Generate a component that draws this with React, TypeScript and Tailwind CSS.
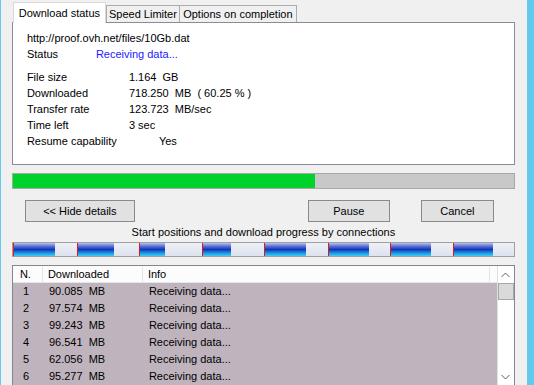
const segments = [
  { w: 64, done: 42 },
  { w: 62, done: 37 },
  { w: 63, done: 26 },
  { w: 62, done: 29 },
  { w: 64, done: 42 },
  { w: 62, done: 41 },
  { w: 63, done: 41 },
  { w: 61, done: 40 },
];

const connections = [
  { n: 1, size: "90.085" },
  { n: 2, size: "97.574" },
  { n: 3, size: "99.243" },
  { n: 4, size: "96.541" },
  { n: 5, size: "62.056" },
  { n: 6, size: "95.277" },
];

const details = [
  { label: "File size", value: "1.164  GB" },
  { label: "Downloaded", value: "718.250  MB  ( 60.25 % )" },
  { label: "Transfer rate", value: "123.723  MB/sec" },
  { label: "Time left", value: "3 sec" },
];

function Button({ children, className }: { children: React.ReactNode; className: string }) {
  return (
    <div
      className={`h-[22px] flex items-center justify-center bg-[#e1e1e1] border border-[#8a8a8a] ${className}`}
    >
      {children}
    </div>
  );
}

export default function App() {
  return (
    <div
      className="w-[534px] h-[385px] overflow-hidden flex bg-[#f0f0f0] text-[11px] text-black whitespace-pre"
      style={{ fontFamily: '"Liberation Sans", Arial, sans-serif' }}
    >
      <div className="w-px bg-[#62caeb]" />

      <div className="flex-1 flex flex-col pl-[11px] pr-[12px] pt-[2px]">
        {/* tabs */}
        <div className="flex items-start pl-px h-[21px] relative z-10">
          <div className="w-[93px] h-[21px] flex items-center justify-center bg-white border border-b-0 border-[#d9d9d9]">
            Download status
          </div>
          <div className="mt-[3px] w-[74px] h-[17px] flex items-center justify-center bg-[#f0f0f0] border border-b-0 border-[#acacac]">
            Speed Limiter
          </div>
          <div className="mt-[3px] w-[117px] h-[17px] flex items-center justify-center bg-[#f0f0f0] border border-b-0 border-l-0 border-[#acacac]">
            Options on completion
          </div>
        </div>

        {/* panel */}
        <div className="-mt-px h-[144px] bg-white border border-[#898c95] pl-[14px] pt-[7px]">
          <div className="h-[16px] leading-[16px]">http://proof.ovh.net/files/10Gb.dat</div>
          <div className="h-[16px] leading-[16px] flex">
            <span className="w-[69px]">Status</span>
            <span className="text-[#1a1aff]">Receiving data...</span>
          </div>
          <div className="mt-[7px]">
            {details.map((d) => (
              <div key={d.label} className="h-[16px] leading-[16px] flex">
                <span className="w-[102px]">{d.label}</span>
                <span>{d.value}</span>
              </div>
            ))}
            <div className="h-[17px] leading-[17px] flex">
              <span className="w-[132px]">Resume capability</span>
              <span>Yes</span>
            </div>
          </div>
        </div>

        {/* progress */}
        <div className="mt-[8px] h-[16px] flex border border-[#a8a8a8] bg-[#c8c8c8]">
          <div className="w-[302px] bg-[#00d22b]" />
        </div>

        {/* buttons */}
        <div className="mt-[11px] flex">
          <Button className="ml-[13px] w-[110px]">{"<< Hide details"}</Button>
          <Button className="ml-[173px] w-[82px]">Pause</Button>
          <Button className="ml-[31px] w-[73px]">Cancel</Button>
        </div>

        <div className="mt-[3px] h-[15px] leading-[15px] text-center">
          Start positions and download progress by connections
        </div>

        {/* connections bar */}
        <div className="mt-[2px] h-[15px] flex border border-[#a0a0a0]">
          {segments.map((s, i) => (
            <div key={i} className="flex shrink-0 h-full" style={{ width: s.w }}>
              <div className="w-px shrink-0 h-full bg-[#e01818]" />
              <div
                className="shrink-0 h-full bg-[linear-gradient(to_bottom,#b8c2ee_0%,#5a72d8_25%,#1434b4_50%,#1c8ee0_75%,#3cd0f4_100%)]"
                style={{ width: s.done - 1 }}
              />
              <div className="flex-1 h-full bg-[linear-gradient(to_bottom,#eef0f7,#dde2ee)]" />
            </div>
          ))}
        </div>

        {/* list */}
        <div className="mt-[8px] flex-1 flex border border-[#828790] border-b-0 bg-[#bfb4bd]">
          <div className="flex-1 flex flex-col">
            <div className="h-[17px] flex bg-[#fcfcfc] border-b border-[#e5e5e5]">
              <div className="w-[30px] pl-[7px] leading-[16px] border-r border-[#e5e5e5]">N.</div>
              <div className="w-[100px] pl-[5px] leading-[16px] border-r border-[#e5e5e5]">Downloaded</div>
              <div className="w-[347px] pl-[5px] leading-[16px] border-r border-[#e5e5e5]">Info</div>
            </div>
            {connections.map((c) => (
              <div key={c.n} className="h-[17px] leading-[17px] flex">
                <div className="w-[30px] pl-[10px]">{c.n}</div>
                <div className="w-[100px] pl-[6px]">{c.size}  MB</div>
                <div className="pl-[6px]">Receiving data...</div>
              </div>
            ))}
          </div>

          {/* scrollbar */}
          <div className="w-[17px] flex flex-col bg-white border-l border-[#e0e0e0]">
            <div className="h-[17px] flex items-center justify-center">
              <svg width="9" height="6" viewBox="0 0 9 6">
                <path d="M0.5 5 L4.5 1 L8.5 5" fill="none" stroke="#606060" strokeWidth="1" />
              </svg>
            </div>
            <div className="h-[17px] bg-[#dadada] border border-[#a8a8a8]" />
            <div className="flex-1" />
            <div className="h-[17px] flex items-center justify-center">
              <svg width="9" height="6" viewBox="0 0 9 6">
                <path d="M0.5 1 L4.5 5 L8.5 1" fill="none" stroke="#606060" strokeWidth="1" />
              </svg>
            </div>
          </div>
        </div>
      </div>

      <div className="w-[8px] bg-[#62caeb]" />
    </div>
  );
}
